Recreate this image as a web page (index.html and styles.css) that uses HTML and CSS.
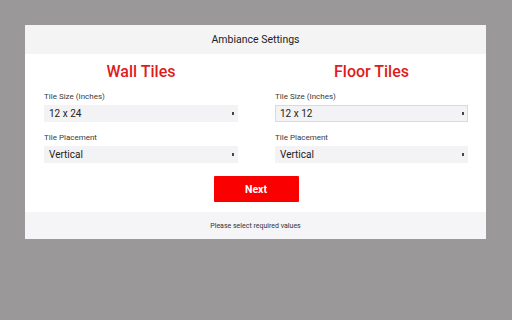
FILE: index.html
```html
<!DOCTYPE html>
<html>
<head>
<meta charset="utf-8">
<link rel="stylesheet" href="styles.css">
</head>
<body>
<div class="modal">
  <div class="modal-header">Ambiance Settings</div>
  <div class="modal-body">
    <div class="columns">
      <div class="col">
        <h2 class="col-title">Wall Tiles</h2>
        <div class="field">
          <div class="label">Tile Size (Inches)</div>
          <div class="select"><span>12 x 24</span><i class="arrow"></i></div>
        </div>
        <div class="field">
          <div class="label">Tile Placement</div>
          <div class="select"><span>Vertical</span><i class="arrow"></i></div>
        </div>
      </div>
      <div class="col">
        <h2 class="col-title">Floor Tiles</h2>
        <div class="field">
          <div class="label">Tile Size (Inches)</div>
          <div class="select focused"><span>12 x 12</span><i class="arrow"></i></div>
        </div>
        <div class="field">
          <div class="label">Tile Placement</div>
          <div class="select"><span>Vertical</span><i class="arrow"></i></div>
        </div>
      </div>
    </div>
    <div class="actions"><button class="btn">Next</button></div>
  </div>
  <div class="modal-footer">Please select required values</div>
</div>
</body>
</html>
```
FILE: styles.css
```css
html, body {
  margin: 0;
  padding: 0;
}
body {
  background: #9a9899;
  width: 512px;
  height: 320px;
  font-family: Roboto, "Liberation Sans", sans-serif;
  padding: 25px 0 0 25px;
  box-sizing: border-box;
}
.modal {
  width: 461px;
  background: #ffffff;
  display: flex;
  flex-direction: column;
}
.modal-header {
  height: 29px;
  background: #f4f4f5;
  display: flex;
  align-items: center;
  justify-content: center;
  font-size: 10.5px;
  color: #222;
  padding-bottom: 1px;
  box-sizing: border-box;
}
.modal-body {
  padding: 8px 18px 10px 19px;
}
.columns {
  display: grid;
  grid-template-columns: 194px 193px;
  column-gap: 37px;
}
.col {
  display: flex;
  flex-direction: column;
}
.col-title {
  margin: 0;
  text-align: center;
  font-size: 16px;
  font-weight: 500;
  line-height: 20px;
  color: #e01b1b;
}
.field {
  display: flex;
  flex-direction: column;
  margin-top: 10px;
}
.field + .field {
  margin-top: 11px;
}
.label {
  font-size: 8px;
  line-height: 10px;
  color: #3a3a3a;
  margin-bottom: 3px;
}
.select {
  height: 17px;
  background: #f3f2f4;
  display: flex;
  align-items: center;
  justify-content: space-between;
  padding: 0 3px 0 4px;
  font-size: 10px;
  color: #222;
  box-sizing: border-box;
  border: 1px solid transparent;
}
.select.focused {
  border-color: #e6dcae;
}
.arrow {
  display: block;
  width: 2px;
  height: 3px;
  background: #444;
}
.actions {
  display: flex;
  justify-content: center;
  margin-top: 13px;
}
.btn {
  width: 85px;
  height: 26px;
  background: #fa0000;
  color: #fff;
  border: none;
  border-radius: 1px;
  font-family: Roboto, "Liberation Sans", sans-serif;
  font-size: 10.5px;
  font-weight: 700;
  padding: 0;
}
.modal-footer {
  height: 27px;
  background: #f5f4f6;
  display: flex;
  align-items: center;
  justify-content: center;
  font-size: 7px;
  color: #333;
}
```
